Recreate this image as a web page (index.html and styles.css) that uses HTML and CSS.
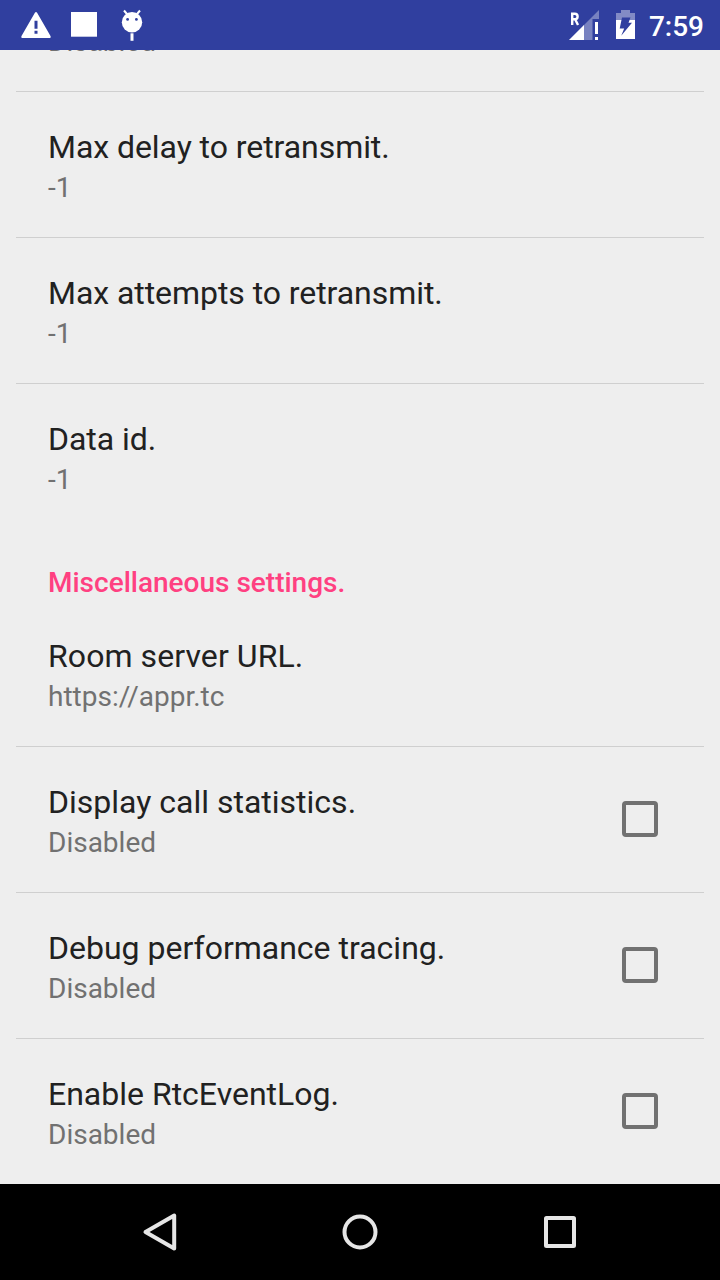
FILE: index.html
```
<!DOCTYPE html>
<html lang="en">
<head>
<meta charset="utf-8">
<title>Settings</title>
<link rel="stylesheet" href="styles.css">
</head>
<body>
<div class="screen">
  <header class="status">
    <div class="notifications">
      <svg width="48" height="50" viewBox="12 0 48 50"><path fill="#fff" fill-rule="evenodd" d="M34.9 12.700q1.100-1.400 2.200 0L50.500 36q.8 2-1.300 2H22.800q-2.100 0-1.300-2zM34.500 20.700v8h3v-8zM34.500 30.700v3h3v-3z"/></svg>
      <svg width="48" height="50" viewBox="60 0 48 50"><path fill="#fff" d="M71 12h26v24.700H71z"/></svg>
      <svg width="48" height="50" viewBox="108 0 48 50"><circle cx="132" cy="22.200" r="10.200" fill="#fff"/><path stroke="#fff" stroke-width="2" d="M124 10.500l3.800 4.500M140 10.500l-3.800 4.500"/><path fill="#fff" d="M130.500 33.300h3v7.500h-3z"/><circle cx="127.600" cy="19.400" r="1.400" fill="#303f9f"/><circle cx="136.400" cy="19.400" r="1.400" fill="#303f9f"/></svg>
    </div>
    <div class="system">
      <svg width="38" height="50" viewBox="565 0 38 50"><path fill="#fff" fill-opacity=".35" d="M599 10v9h-6.500v21H569z"/><path fill="#fff" d="M584 25v15h-15zM595 22h3v12h-3zM595 37h3v3h-3z"/><path fill="none" stroke="#fff" stroke-width="2.400" d="M572.200 25V13.700h2.600q2.800 0 2.800 2.800t-2.800 2.800H572M575 19l3 6"/></svg>
      <svg width="32" height="50" viewBox="609 0 32 50"><path fill="#fff" fill-opacity=".4" d="M616 20v-7h5v-3h9v3h5v7z"/><path fill="#fff" d="M616 20h19v19h-19z"/><path fill="#303f9f" d="M622 17.500h8.500l-2 5.200h3.500L621.200 35.700l3-7.200H619.700z"/></svg>
      <span class="clock">7:59</span>
    </div>
  </header>
  <main class="list">
    <div class="row partial"><div class="text"><div class="title">Data channel.</div><div class="summary">Disabled</div></div></div>
    <div class="row"><div class="text"><div class="title tight">Max delay to retransmit.</div><div class="summary">-1</div></div></div>
    <div class="row"><div class="text"><div class="title tight">Max attempts to retransmit.</div><div class="summary">-1</div></div></div>
    <div class="row last"><div class="text"><div class="title tight">Data id.</div><div class="summary">-1</div></div></div>
    <h2 class="category">Miscellaneous settings.</h2>
    <div class="row"><div class="text"><div class="title wide">Room server URL.</div><div class="summary">https://appr.tc</div></div></div>
    <div class="row"><div class="text"><div class="title">Display call statistics.</div><div class="summary">Disabled</div></div><span class="checkbox"></span></div>
    <div class="row"><div class="text"><div class="title">Debug performance tracing.</div><div class="summary">Disabled</div></div><span class="checkbox"></span></div>
    <div class="row last"><div class="text"><div class="title">Enable RtcEventLog.</div><div class="summary">Disabled</div></div><span class="checkbox"></span></div>
  </main>
  <nav class="navbar">
    <svg width="40" height="40" viewBox="140 1212 40 40"><path d="M174.200 1215.500v33l-28.700-16.500z"/></svg>
    <svg width="40" height="40" viewBox="340 1212 40 40"><circle cx="360" cy="1232" r="15.500"/></svg>
    <svg width="40" height="40" viewBox="540 1212 40 40"><rect x="546" y="1218" width="28" height="28" rx=".5"/></svg>
  </nav>
</div>
</body>
</html>
```
FILE: styles.css
```
body {
  margin: 0;
  font-family: Roboto, sans-serif;
}

.screen {
  display: flex;
  flex-direction: column;
  width: 720px;
  height: 1280px;
  overflow: hidden;
  background: #eee;
}

.status {
  display: flex;
  justify-content: space-between;
  flex: none;
  height: 50px;
  padding: 0 16px 0 12px;
  background: #303f9f;
}

.notifications {
  display: flex;
}

.system {
  display: flex;
  gap: 6px;
}

.clock {
  padding-left: 2px;
  color: #fff;
  font-size: 28px;
  font-weight: 500;
  line-height: 54px;
}

.list {
  flex: none;
  height: 1134px;
  overflow: hidden;
}

.row {
  display: flex;
  align-items: flex-start;
  justify-content: space-between;
  box-sizing: border-box;
  height: 146px;
  margin: 0 16px;
  padding: 34px 46px 0 32px;
  border-bottom: 1px solid #cfcfcf;
}

.partial {
  margin-top: -104px;
}

.last {
  border-bottom-color: transparent;
}

.title {
  color: #212121;
  font-size: 32px;
  line-height: 43px;
  white-space: nowrap;
}

.tight {
  letter-spacing: -0.06px;
}

.wide {
  letter-spacing: 0.08px;
}

.summary {
  color: #717171;
  font-size: 28px;
  line-height: 38px;
}

.category {
  height: 71px;
  margin: 0;
  padding: 0 48px;
  color: #ff4081;
  font-size: 28px;
  font-weight: 500;
  line-height: 105px;
}

.checkbox {
  box-sizing: border-box;
  width: 36px;
  height: 36px;
  margin-top: 20px;
  border: 4px solid #717171;
  border-radius: 4px;
}

.navbar {
  display: flex;
  align-items: center;
  justify-content: space-between;
  flex: none;
  height: 96px;
  padding: 0 140px;
  background: #000;
}

.navbar svg {
  fill: none;
  stroke: #e6e6e6;
  stroke-width: 4;
  stroke-linejoin: round;
}
```
